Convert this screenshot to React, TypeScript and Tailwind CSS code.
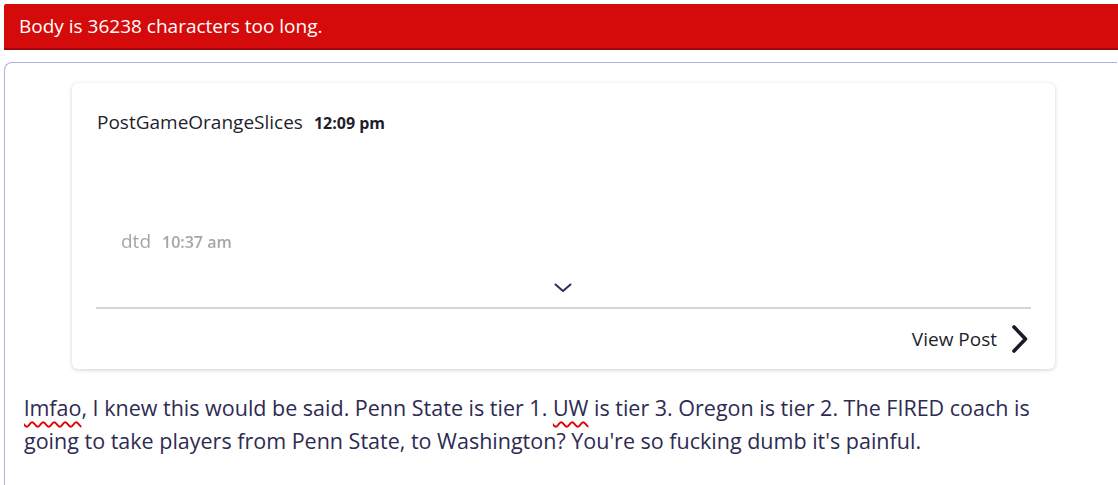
import React from "react";

export default function App() {
  return (
    <div className="min-h-[485px] bg-white pt-[4px] pl-[4px]" style={{ fontFamily: '"Open Sans", "Noto Sans", sans-serif' }}>
      <div className="h-[46px] bg-[#d50b0b] border-b-[2px] border-[#a00808] flex items-center pl-[15px] text-white text-[19px] rounded-tl-[2px]">
        Body is 36238 characters too long.
      </div>
      <div className="mt-[12px] mr-[1px] border-l border-t border-[#b4b1d8] rounded-tl-[8px] h-[440px] pt-[20px]">
        <div className="ml-[67px] mr-[62px] bg-white rounded-[6px] shadow-[0_1px_4px_rgba(0,0,0,0.18)] px-[24px] pt-[27px]">
          <div className="flex items-baseline gap-[11px] pl-[1px]">
            <span className="text-[19px] leading-[24px] text-[#1e1e2d]">PostGameOrangeSlices</span>
            <span className="text-[16px] font-bold text-[#1e1e2d]">12:09 pm</span>
          </div>
          <div className="mt-[66px] h-[60px] rounded-t-[6px] shadow-[0_0_5px_rgba(0,0,0,0.13)] px-[25px] pt-[28px] [mask-image:linear-gradient(to_bottom,black_75%,transparent)]">
            <div className="flex items-baseline gap-[11px]">
              <span className="text-[19px] leading-[24px] text-[#a4a4aa]">dtd</span>
              <span className="text-[16px] font-semibold text-[#a4a4aa]">10:37 am</span>
            </div>
          </div>
          <div className="h-[46px] flex items-center justify-center pt-[8px]">
            <svg width="18" height="10" viewBox="0 0 18 10" fill="none" className="ml-[-2px]">
              <path d="M1.5 1.5 L9 8 L16.5 1.5" stroke="#2e2b55" strokeWidth="2" strokeLinecap="round" strokeLinejoin="round" />
            </svg>
          </div>
          <div className="h-[2px] bg-[#d5d4dc]" />
          <div className="h-[60px] flex items-center justify-end gap-[14px]">
            <span className="text-[19px] text-[#1e1e2d]">View Post</span>
            <svg width="18" height="30" viewBox="0 0 18 30" fill="none" className="mr-[2px]">
              <path d="M3 3 L14.5 15 L3 27" stroke="#1a1a28" strokeWidth="3.6" strokeLinecap="round" strokeLinejoin="round" />
            </svg>
          </div>
        </div>
        <p className="mt-[22px] pl-[19px] pr-[50px] text-[21.5px] leading-[33px] text-[#2e2b52]">
          <span className="underline decoration-wavy decoration-[#e00000] decoration-[1.5px] underline-offset-[5px]">lmfao</span>, I knew this would be said. Penn State is tier 1.{" "}
          <span className="underline decoration-wavy decoration-[#e00000] decoration-[1.5px] underline-offset-[5px]">UW</span> is tier 3. Oregon is tier 2. The FIRED coach is going to take players from Penn State, to Washington? You're so fucking dumb it's painful.
        </p>
      </div>
    </div>
  );
}
